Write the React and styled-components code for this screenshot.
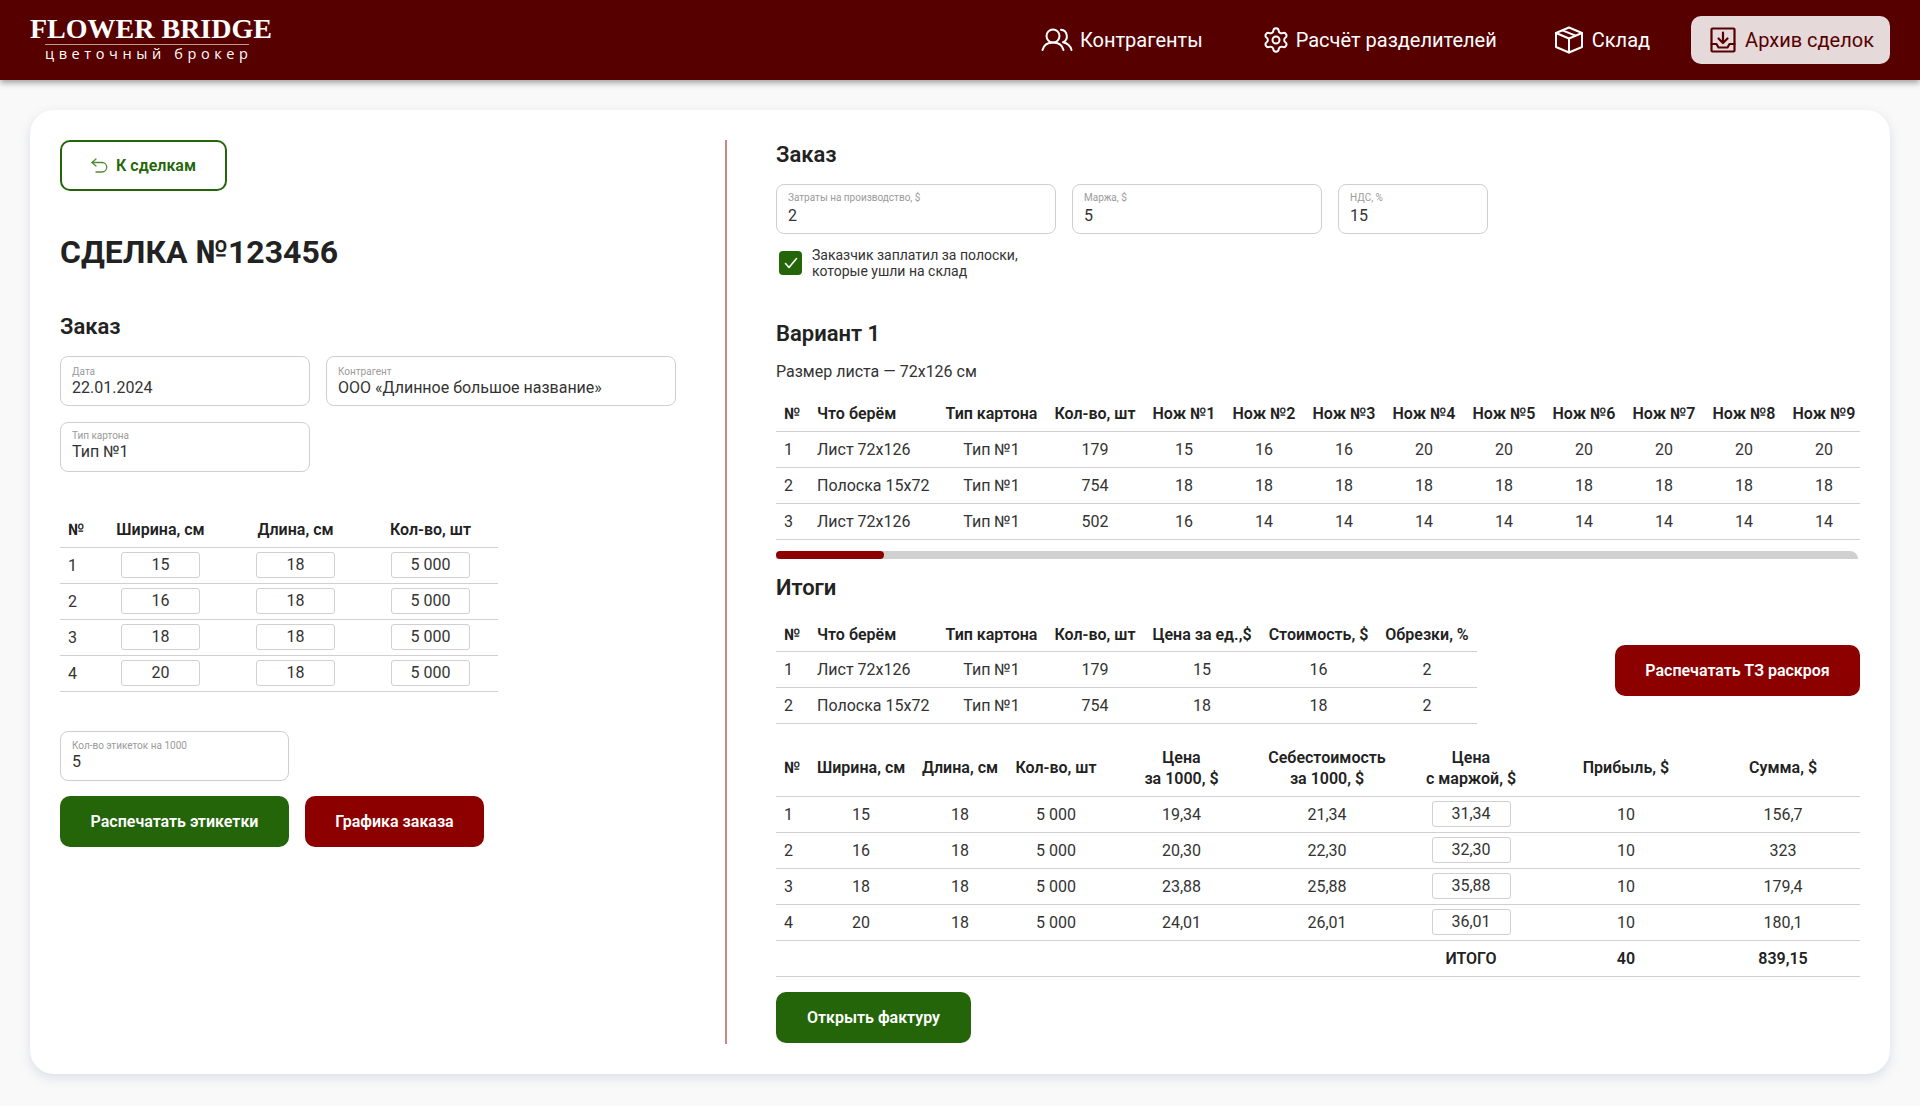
// App.jsx
import React from "react";
import styled, { createGlobalStyle } from "styled-components";
import { Settings } from "lucide-react";

const GlobalStyle = createGlobalStyle`
  html, body {
    margin: 0;
    padding: 0;
    background: #f9f9f9;
    font-family: Roboto, "Liberation Sans", sans-serif;
    color: #222;
  }
  * { box-sizing: border-box; }
`;

const Header = styled.header`
  height: 80px;
  background: #560000;
  box-shadow: 0 3px 6px rgba(0, 0, 0, 0.35);
  display: flex;
  align-items: center;
  justify-content: space-between;
  padding: 0 30px;
`;

const Logo = styled.div`
  width: 243px;
  color: #fff;
  display: flex;
  flex-direction: column;
  margin-top: -3px;
`;

const LogoName = styled.div`
  font-family: "Liberation Serif", serif;
  font-size: 28px;
  line-height: 26px;
  font-weight: 700;
  white-space: nowrap;
  margin-bottom: 2px;
`;

const LogoSub = styled.div`
  margin-left: 15px;
  width: 204px;
  border-top: 1px solid rgba(255, 255, 255, 0.6);
  font-family: "Open Sans", sans-serif;
  font-size: 14.5px;
  line-height: 17px;
  letter-spacing: 4.6px;
  white-space: nowrap;
`;

const Nav = styled.nav`
  display: flex;
  align-items: center;
`;

const NavItem = styled.a`
  display: flex;
  align-items: center;
  gap: ${(p) => p.$gap || 8}px;
  height: 48px;
  font-size: 20px;
  color: ${(p) => (p.$active ? "#560000" : "#fff")};
  background: ${(p) => (p.$active ? "#e6d9d9" : "transparent")};
  border-radius: 10px;
  padding: 0 ${(p) => (p.$active ? 16 : 0)}px 0 ${(p) => (p.$active ? 19 : 0)}px;
  margin-left: ${(p) => p.$left}px;
  white-space: nowrap;
`;

const Main = styled.main`
  padding: 30px 30px 32px;
`;

const Card = styled.div`
  height: 964px;
  background: #fff;
  border-radius: 24px;
  box-shadow: 0 4px 12px rgba(70, 90, 140, 0.16);
  padding: 30px;
  display: flex;
`;

const LeftColumn = styled.section`
  width: 667px;
  border-right: 2px solid #c48a8a;
`;

const RightColumn = styled.section`
  flex: 1;
  padding: 2px 0 0 49px;
  min-width: 0;
`;

const BackButton = styled.button`
  width: 167px;
  height: 51px;
  border: 2px solid #256509;
  border-radius: 10px;
  background: #fff;
  color: #256509;
  font: 600 16px Roboto, sans-serif;
  display: flex;
  align-items: center;
  justify-content: center;
  gap: 8px;
`;

const Title = styled.h1`
  margin: 42px 0 0;
  font-size: 32px;
  line-height: 38px;
  font-weight: 700;
`;

const Heading = styled.h2`
  margin: ${(p) => p.$top || 0}px 0 0;
  font-size: 22px;
  line-height: 26px;
  font-weight: 600;
`;

const FieldRow = styled.div`
  display: flex;
  gap: 16px;
  margin-top: ${(p) => p.$top}px;
`;

const Field = styled.div`
  width: ${(p) => p.$w}px;
  height: 50px;
  border: 1px solid #cfcfcf;
  border-radius: 8px;
  padding: ${(p) => p.$pad || 7}px 11px 0;
`;

const FieldLabel = styled.div`
  font-size: 10px;
  line-height: 12px;
  color: #9a9a9a;
  margin-bottom: ${(p) => p.$gap || 0}px;
`;

const FieldValue = styled.div`
  font-size: 16px;
  line-height: 19px;
  color: #333;
`;

const TableScroll = styled.div`
  width: 1084px;
  overflow: hidden;
  margin-top: ${(p) => p.$top || 0}px;
`;

const Table = styled.table`
  table-layout: fixed;
  border-collapse: collapse;
  width: ${(p) => p.$w}px;
  margin-top: ${(p) => p.$top || 0}px;
  font-size: 16px;
`;

const Col = styled.col`
  width: ${(p) => p.$w}px;
`;

const Th = styled.th`
  height: ${(p) => p.$h || 34}px;
  padding: 0 8px;
  font-weight: 600;
  line-height: 21px;
  color: #222;
  text-align: ${(p) => p.$align || "center"};
  white-space: nowrap;
  border-bottom: 1px solid #d0d0d0;
`;

const Td = styled.td`
  height: 36px;
  padding: 0 8px;
  font-weight: ${(p) => (p.$bold ? 600 : 400)};
  color: ${(p) => (p.$bold ? "#222" : "#333")};
  text-align: ${(p) => p.$align || "center"};
  white-space: nowrap;
  border-bottom: 1px solid #d0d0d0;
`;

const CellInput = styled.div`
  width: 79px;
  height: 26px;
  margin: 0 auto;
  border: 1px solid #d0d0d0;
  border-radius: 3px;
  line-height: 24px;
  text-align: center;
  color: #333;
`;

const ActionRow = styled.div`
  display: flex;
  gap: 16px;
  margin-top: ${(p) => p.$top || 0}px;
`;

const ActionButton = styled.button`
  width: ${(p) => p.$w}px;
  height: 51px;
  border: none;
  border-radius: 10px;
  background: ${(p) => (p.$red ? "#8c0000" : "#256509")};
  color: #fff;
  font: 600 16px Roboto, sans-serif;
  white-space: nowrap;
  padding: 0;
`;

const CheckRow = styled.label`
  display: flex;
  align-items: center;
  gap: 10px;
  margin: 13px 0 0 3px;
  font-size: 14px;
  line-height: 16px;
  color: #333;
`;

const CheckBox = styled.span`
  width: 23px;
  height: 24px;
  border-radius: 4px;
  background: #256509;
  display: flex;
  align-items: center;
  justify-content: center;
`;

const SheetSize = styled.p`
  margin: 15px 0 0;
  font-size: 16px;
  line-height: 19px;
  color: #333;
`;

const ScrollTrack = styled.div`
  margin-top: 11px;
  height: 8px;
  width: 1082px;
  background: #d0d0d0;
  border-radius: 8px 8px 0 0;
`;

const ScrollThumb = styled.div`
  width: 108px;
  height: 8px;
  background: #8c0000;
  border-radius: 4px;
`;

const TotalsRow = styled.div`
  display: flex;
  align-items: center;
  justify-content: space-between;
  margin-top: 17px;
`;

const UsersIcon = () => (
  <svg width="32" height="24" viewBox="0 0 32 24" fill="none" stroke="#fff" strokeWidth="2" strokeLinecap="round" strokeLinejoin="round">
    <circle cx="12" cy="8" r="6.5" />
    <path d="M1.5 22c1-4 4.5-7.5 10.500-7.500s9.500 3.500 10.500 7.500" />
    <path d="M20 1.800a6.500 6.500 0 0 1 2 12.400c4 .8 7.500 3.800 8.500 7.800" />
  </svg>
);

const BoxIcon = () => (
  <svg width="30" height="28" viewBox="0 0 30 28" fill="none" stroke="#fff" strokeWidth="2" strokeLinejoin="round" strokeLinecap="round">
    <path d="M15 1.500 28 7v14l-13 5.500L2 21V7z" />
    <path d="M2 7l13 5.500L28 7M15 12.500v14" />
    <path d="M8.500 4.300 21.500 9.700" />
  </svg>
);

const ArchiveIcon = () => (
  <svg width="26" height="26" viewBox="0 0 26 26" fill="none" stroke="#560000" strokeWidth="2.200" strokeLinejoin="round" strokeLinecap="round">
    <rect x="1.500" y="1.500" width="23" height="23" rx="1" />
    <path d="M13 5.500v10M8.500 11.500l4.500 4.500 4.500-4.500" />
    <path d="M1.500 17h5l2 3.500h9l2-3.500h5" />
  </svg>
);

const BackIcon = () => (
  <svg width="17" height="15" viewBox="0 0 17 15" fill="none" stroke="#4f8a36" strokeWidth="1.300" strokeLinecap="round" strokeLinejoin="round">
    <path d="M5 1 1 4.500 5 8" />
    <path d="M1 4.500h10a4.500 4.500 0 0 1 0 9.500H5" />
  </svg>
);

const CheckIcon = () => (
  <svg width="14" height="12" viewBox="0 0 14 12" fill="none" stroke="#fff" strokeWidth="1.600" strokeLinecap="round" strokeLinejoin="round">
    <path d="M1.500 6.500 5 10.500 12.500 1.500" />
  </svg>
);

const sizes = [
  [1, 15, 18, "5 000"],
  [2, 16, 18, "5 000"],
  [3, 18, 18, "5 000"],
  [4, 20, 18, "5 000"],
];

const knives = [1, 2, 3, 4, 5, 6, 7, 8, 9];

const cutRows = [
  [1, "Лист 72х126", "Тип №1", 179, [15, 16, 16, 20, 20, 20, 20, 20, 20]],
  [2, "Полоска 15х72", "Тип №1", 754, [18, 18, 18, 18, 18, 18, 18, 18, 18]],
  [3, "Лист 72х126", "Тип №1", 502, [16, 14, 14, 14, 14, 14, 14, 14, 14]],
];

const totalRows = [
  [1, "Лист 72х126", "Тип №1", 179, 15, 16, 2],
  [2, "Полоска 15х72", "Тип №1", 754, 18, 18, 2],
];

const priceRows = [
  [1, 15, 18, "5 000", "19,34", "21,34", "31,34", 10, "156,7"],
  [2, 16, 18, "5 000", "20,30", "22,30", "32,30", 10, "323"],
  [3, 18, 18, "5 000", "23,88", "25,88", "35,88", 10, "179,4"],
  [4, 20, 18, "5 000", "24,01", "26,01", "36,01", 10, "180,1"],
];

const Cols = ({ widths }) => (
  <colgroup>
    {widths.map((w, i) => (
      <Col key={i} $w={w} />
    ))}
  </colgroup>
);

const App = () => {
  return (
    <>
      <GlobalStyle />
      <Header>
        <Logo>
          <LogoName>FLOWER BRIDGE</LogoName>
          <LogoSub>цветочный брокер</LogoSub>
        </Logo>
        <Nav>
          <NavItem $gap={7}><UsersIcon />Контрагенты</NavItem>
          <NavItem $left={59} $gap={6}><Settings size={28} color="#fff" strokeWidth={1.7} />Расчёт разделителей</NavItem>
          <NavItem $left={57}><BoxIcon />Склад</NavItem>
          <NavItem $active $left={41} $gap={9}><ArchiveIcon />Архив сделок</NavItem>
        </Nav>
      </Header>
      <Main>
        <Card>
          <LeftColumn>
            <BackButton><BackIcon />К сделкам</BackButton>
            <Title>СДЕЛКА №123456</Title>
            <Heading $top={43}>Заказ</Heading>
            <FieldRow $top={16}>
              <Field $w={250} $pad={9}>
                <FieldLabel>Дата</FieldLabel>
                <FieldValue>22.01.2024</FieldValue>
              </Field>
              <Field $w={350} $pad={9}>
                <FieldLabel>Контрагент</FieldLabel>
                <FieldValue>ООО «Длинное большое название»</FieldValue>
              </Field>
            </FieldRow>
            <FieldRow $top={16}>
              <Field $w={250}>
                <FieldLabel>Тип картона</FieldLabel>
                <FieldValue>Тип №1</FieldValue>
              </Field>
            </FieldRow>
            <Table $w={438} $top={41}>
              <Cols widths={[33, 135, 135, 135]} />
              <thead>
                <tr>
                  <Th $align="left">№</Th>
                  <Th>Ширина, см</Th>
                  <Th>Длина, см</Th>
                  <Th>Кол-во, шт</Th>
                </tr>
              </thead>
              <tbody>
                {sizes.map((row) => (
                  <tr key={row[0]}>
                    <Td $align="left">{row[0]}</Td>
                    <Td><CellInput>{row[1]}</CellInput></Td>
                    <Td><CellInput>{row[2]}</CellInput></Td>
                    <Td><CellInput>{row[3]}</CellInput></Td>
                  </tr>
                ))}
              </tbody>
            </Table>
            <FieldRow $top={39}>
              <Field $w={229} $pad={8}>
                <FieldLabel>Кол-во этикеток на 1000</FieldLabel>
                <FieldValue>5</FieldValue>
              </Field>
            </FieldRow>
            <ActionRow $top={15}>
              <ActionButton $w={229}>Распечатать этикетки</ActionButton>
              <ActionButton $w={179} $red>Графика заказа</ActionButton>
            </ActionRow>
          </LeftColumn>
          <RightColumn>
            <Heading>Заказ</Heading>
            <FieldRow $top={16}>
              <Field $w={280}>
                <FieldLabel $gap={2}>Затраты на производство, $</FieldLabel>
                <FieldValue>2</FieldValue>
              </Field>
              <Field $w={250}>
                <FieldLabel $gap={2}>Маржа, $</FieldLabel>
                <FieldValue>5</FieldValue>
              </Field>
              <Field $w={150}>
                <FieldLabel $gap={2}>НДС, %</FieldLabel>
                <FieldValue>15</FieldValue>
              </Field>
            </FieldRow>
            <CheckRow>
              <CheckBox><CheckIcon /></CheckBox>
              <span>Заказчик заплатил за полоски,<br />которые ушли на склад</span>
            </CheckRow>
            <Heading $top={42}>Вариант 1</Heading>
            <SheetSize>Размер листа — 72х126 см</SheetSize>
            <TableScroll $top={16}>
              <Table $w={1088}>
                <Cols widths={[33, 128, 109, 98, 80, 80, 80, 80, 80, 80, 80, 80, 80]} />
                <thead>
                  <tr>
                    <Th $align="left">№</Th>
                    <Th $align="left">Что берём</Th>
                    <Th>Тип картона</Th>
                    <Th>Кол-во, шт</Th>
                    {knives.map((n) => (
                      <Th key={n}>Нож №{n}</Th>
                    ))}
                  </tr>
                </thead>
                <tbody>
                  {cutRows.map((row) => (
                    <tr key={row[0]}>
                      <Td $align="left">{row[0]}</Td>
                      <Td $align="left">{row[1]}</Td>
                      <Td>{row[2]}</Td>
                      <Td>{row[3]}</Td>
                      {row[4].map((v, i) => (
                        <Td key={i}>{v}</Td>
                      ))}
                    </tr>
                  ))}
                </tbody>
              </Table>
            </TableScroll>
            <ScrollTrack><ScrollThumb /></ScrollTrack>
            <Heading $top={16}>Итоги</Heading>
            <TotalsRow>
              <Table $w={701}>
                <Cols widths={[33, 128, 109, 98, 116, 117, 100]} />
                <thead>
                  <tr>
                    <Th $align="left">№</Th>
                    <Th $align="left">Что берём</Th>
                    <Th>Тип картона</Th>
                    <Th>Кол-во, шт</Th>
                    <Th>Цена за ед.,$</Th>
                    <Th>Стоимость, $</Th>
                    <Th>Обрезки, %</Th>
                  </tr>
                </thead>
                <tbody>
                  {totalRows.map((row) => (
                    <tr key={row[0]}>
                      <Td $align="left">{row[0]}</Td>
                      <Td $align="left">{row[1]}</Td>
                      <Td>{row[2]}</Td>
                      <Td>{row[3]}</Td>
                      <Td>{row[4]}</Td>
                      <Td>{row[5]}</Td>
                      <Td>{row[6]}</Td>
                    </tr>
                  ))}
                </tbody>
              </Table>
              <ActionButton $w={245} $red>Распечатать ТЗ раскроя</ActionButton>
            </TotalsRow>
            <Table $w={1084} $top={16}>
              <Cols widths={[33, 104, 94, 98, 153, 138, 150, 160, 154]} />
              <thead>
                <tr>
                  <Th $h={56} $align="left">№</Th>
                  <Th $h={56}>Ширина, см</Th>
                  <Th $h={56}>Длина, см</Th>
                  <Th $h={56}>Кол-во, шт</Th>
                  <Th $h={56}>Цена<br />за 1000, $</Th>
                  <Th $h={56}>Себестоимость<br />за 1000, $</Th>
                  <Th $h={56}>Цена<br />с маржой, $</Th>
                  <Th $h={56}>Прибыль, $</Th>
                  <Th $h={56}>Сумма, $</Th>
                </tr>
              </thead>
              <tbody>
                {priceRows.map((row) => (
                  <tr key={row[0]}>
                    <Td $align="left">{row[0]}</Td>
                    <Td>{row[1]}</Td>
                    <Td>{row[2]}</Td>
                    <Td>{row[3]}</Td>
                    <Td>{row[4]}</Td>
                    <Td>{row[5]}</Td>
                    <Td><CellInput>{row[6]}</CellInput></Td>
                    <Td>{row[7]}</Td>
                    <Td>{row[8]}</Td>
                  </tr>
                ))}
                <tr>
                  <Td colSpan={6} />
                  <Td $bold>ИТОГО</Td>
                  <Td $bold>40</Td>
                  <Td $bold>839,15</Td>
                </tr>
              </tbody>
            </Table>
            <ActionRow $top={15}>
              <ActionButton $w={195}>Открыть фактуру</ActionButton>
            </ActionRow>
          </RightColumn>
        </Card>
      </Main>
    </>
  );
};

export default App;
